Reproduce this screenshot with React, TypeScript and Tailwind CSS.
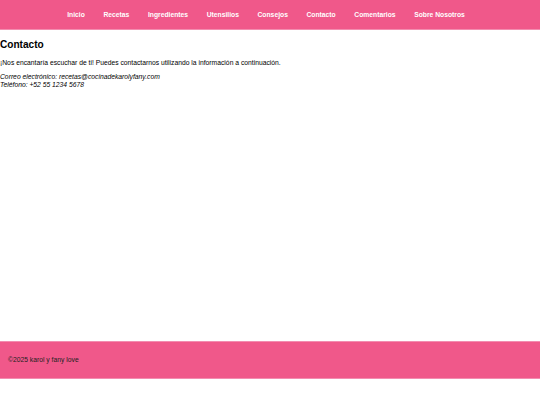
export default function App() {
  const links = ["Inicio", "Recetas", "Ingredientes", "Utensilios", "Consejos", "Contacto", "Comentarios", "Sobre Nosotros"];
  return (
    <div className="w-[540px] h-[405px] bg-white text-black" style={{ fontFamily: '"Liberation Sans", Arial, sans-serif' }}>
      <header className="h-[30px] bg-[#f0588a] border-b border-[#f38db0] flex items-center justify-center">
        <nav className="flex gap-[18.6px] pr-[8px] pt-[1px]">
          {links.map((l) => (
            <a key={l} className="text-white font-bold text-[6.75px] leading-none">{l}</a>
          ))}
        </nav>
      </header>
      <main className="h-[311px] pt-[8px]">
        <h2 className="font-bold text-[10.1px] leading-[12px] mt-[1px]">Contacto</h2>
        <p className="text-[6.75px] leading-[8px] mt-[8px]">¡Nos encantaría escuchar de ti! Puedes contactarnos utilizando la información a continuación.</p>
        <p className="text-[6.75px] leading-[8px] mt-[6px] italic">
          Correo electrónico: recetas@cocinadekarolyfany.com
          <br />
          Teléfono: +52 55 1234 5678
        </p>
      </main>
      <footer className="h-[38px] bg-[#f0588a] border-t border-b border-[#f38db0] flex items-center pl-[8px]">
        <p className="text-[6.75px] leading-none text-[#222]">©2025 karol y fany love</p>
      </footer>
    </div>
  );
}
